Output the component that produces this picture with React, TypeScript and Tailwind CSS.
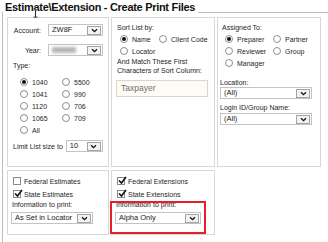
import React from "react";

const Chevron = () => (
  <svg width="7" height="5" viewBox="0 0 7 5" className="block">
    <path d="M1 1.2 L3.5 3.7 L6 1.2" fill="none" stroke="#111" strokeWidth="1.3" />
  </svg>
);

function Select({
  value,
  className,
  blurred,
}: {
  value?: string;
  className: string;
  blurred?: boolean;
}) {
  return (
    <div className={`flex h-[12px] items-center border border-[#c3c3c3] bg-white ${className}`}>
      {blurred ? (
        <span className="ml-[3px] h-[6px] w-[24px] bg-[#b5b5b5] blur-[1.5px]" />
      ) : (
        <span className="pl-[3px] text-[7.5px] leading-[10px] text-[#1a1a1a]">{value}</span>
      )}
      <span className="ml-auto mr-[1px] flex h-[9px] w-[14px] items-center justify-center border border-[#a3a3a3] bg-[#f3f3f3]">
        <Chevron />
      </span>
    </div>
  );
}

function Radio({ label, checked }: { label: string; checked?: boolean }) {
  return (
    <div className="flex h-[12px] items-center">
      <span className="flex h-[8px] w-[8px] items-center justify-center rounded-full border border-[#8e8e8e] bg-white">
        {checked && <span className="h-[4px] w-[4px] rounded-full bg-[#111]" />}
      </span>
      <span className="ml-[4px] text-[7px] leading-[9px]">{label}</span>
    </div>
  );
}

function Check({ label, checked }: { label: string; checked?: boolean }) {
  return (
    <div className="flex h-[10px] items-center">
      <span className="relative h-[8px] w-[8px] border border-[#8a8a8a] bg-white">
        {checked && (
          <svg className="absolute -top-[2px] left-0" width="9" height="9" viewBox="0 0 9 9">
            <path d="M1 4.5 L3.5 7 L8 1" fill="none" stroke="#111" strokeWidth="1.6" />
          </svg>
        )}
      </span>
      <span className="ml-[3px] text-[7px] leading-[9px]">{label}</span>
    </div>
  );
}

export default function App() {
  return (
    <div className="relative h-[242px] w-[328px] overflow-hidden bg-white font-['Liberation_Sans',Arial,sans-serif] text-[#262626]">
      <div className="ml-[2px] mt-[12px] h-[260px] border-l border-t border-[#bdbdbd]">
        <div className="-mt-[13px] w-fit bg-white pl-[2px] pr-[3px] text-[11px] font-bold leading-[14px] tracking-[-0.3px] text-[#111]">
          {"Estimate\\Extension - Create Print Files"}
        </div>

        <div className="ml-[4px] mt-[3px] grid grid-cols-[102px_104px_104px] grid-rows-[150px_65px] gap-x-[2px] gap-y-[3px]">
          {/* account / type */}
          <div className="flex flex-col border border-[#d8d8d8]">
            <div className="mt-[6px] flex items-center">
              <span className="w-[33px] text-right text-[7px] leading-[9px]">Account:</span>
              <Select className="ml-[7px] w-[55px]" value="ZW8F" />
            </div>
            <div className="mt-[8px] flex items-center">
              <span className="w-[33px] text-right text-[7px] leading-[9px]">Year:</span>
              <Select className="ml-[7px] w-[55px]" blurred />
            </div>
            <div className="mt-[5px] pl-[5px] text-[7px] leading-[9px]">Type:</div>
            <div className="mt-[6px] grid grid-cols-[42px_auto] pl-[12px]">
              <Radio label="1040" checked />
              <Radio label="5500" />
              <Radio label="1041" />
              <Radio label="990" />
              <Radio label="1120" />
              <Radio label="706" />
              <Radio label="1065" />
              <Radio label="709" />
              <Radio label="All" />
            </div>
            <div className="mt-[4px] flex items-center pl-[5px]">
              <span className="text-[7px] leading-[9px]">Limit List size to</span>
              <Select className="ml-[3px] w-[37px]" value="10" />
            </div>
          </div>

          {/* sort */}
          <div className="flex flex-col border border-[#d8d8d8]">
            <div className="mt-[5px] pl-[5px] text-[7px] leading-[9px]">Sort List by:</div>
            <div className="mt-[1px] grid grid-cols-[39px_auto] pl-[8px]">
              <Radio label="Name" checked />
              <Radio label="Client Code" />
              <Radio label="Locator" />
            </div>
            <div className="mt-[1px] pl-[5px] text-[7px] leading-[8.5px]">
              And Match These First
              <br />
              Characters of Sort Column:
            </div>
            <div className="ml-[4px] mt-[5px] flex h-[17px] w-[92px] items-center border border-[#ddd6c8] bg-[#fdfbf6] pl-[4px] text-[8.5px] text-[#6e6e6e]">
              Taxpayer
            </div>
          </div>

          {/* assigned */}
          <div className="flex flex-col border border-[#d8d8d8]">
            <div className="mt-[5px] pl-[4px] text-[7px] leading-[9px]">Assigned To:</div>
            <div className="mt-[1px] grid grid-cols-[48px_auto] pl-[7px]">
              <Radio label="Preparer" checked />
              <Radio label="Partner" />
              <Radio label="Reviewer" />
              <Radio label="Group" />
              <Radio label="Manager" />
            </div>
            <div className="mt-[9px] pl-[2px] text-[7px] leading-[9px]">Location:</div>
            <Select className="ml-[2px] w-[92px]" value="(All)" />
            <div className="mt-[4px] pl-[2px] text-[7px] leading-[9px]">Login ID/Group Name:</div>
            <Select className="ml-[2px] mt-[1px] w-[92px]" value="(All)" />
          </div>

          {/* estimates */}
          <div className="flex flex-col border border-[#d8d8d8]">
            <div className="mt-[5px] pl-[5px]">
              <Check label="Federal Estimates" />
            </div>
            <div className="mt-[3px] pl-[5px]">
              <Check label="State Estimates" checked />
            </div>
            <div className="mt-[1px] pl-[4px] text-[7px] leading-[9px]">Information to print:</div>
            <Select className="ml-[3px] mt-[3px] w-[82px]" value="As Set in Locator" />
          </div>

          {/* extensions */}
          <div className="relative flex flex-col border border-[#d8d8d8]">
            <div className="mt-[5px] pl-[5px]">
              <Check label="Federal Extensions" checked />
            </div>
            <div className="mt-[3px] pl-[5px]">
              <Check label="State Extensions" checked />
            </div>
            <div className="mt-[1px] pl-[4px] text-[7px] leading-[9px]">Information to print:</div>
            <Select className="ml-[3px] mt-[3px] w-[86px]" value="Alpha Only" />
            <div className="absolute left-[-2px] top-[30px] h-[33px] w-[96px] border-2 border-[#e3202b]" />
          </div>
        </div>
      </div>

      {/* text cursor over the title */}
      <svg className="absolute left-[33px] top-[9px]" width="5" height="9" viewBox="0 0 5 9">
        <path d="M0.5 0.8 H4.5 M2.5 0.8 V8.2 M0.5 8.2 H4.5" fill="none" stroke="#fff" strokeWidth="2" />
        <path d="M0.5 0.8 H4.5 M2.5 0.8 V8.2 M0.5 8.2 H4.5" fill="none" stroke="#111" strokeWidth="0.9" />
      </svg>
    </div>
  );
}
